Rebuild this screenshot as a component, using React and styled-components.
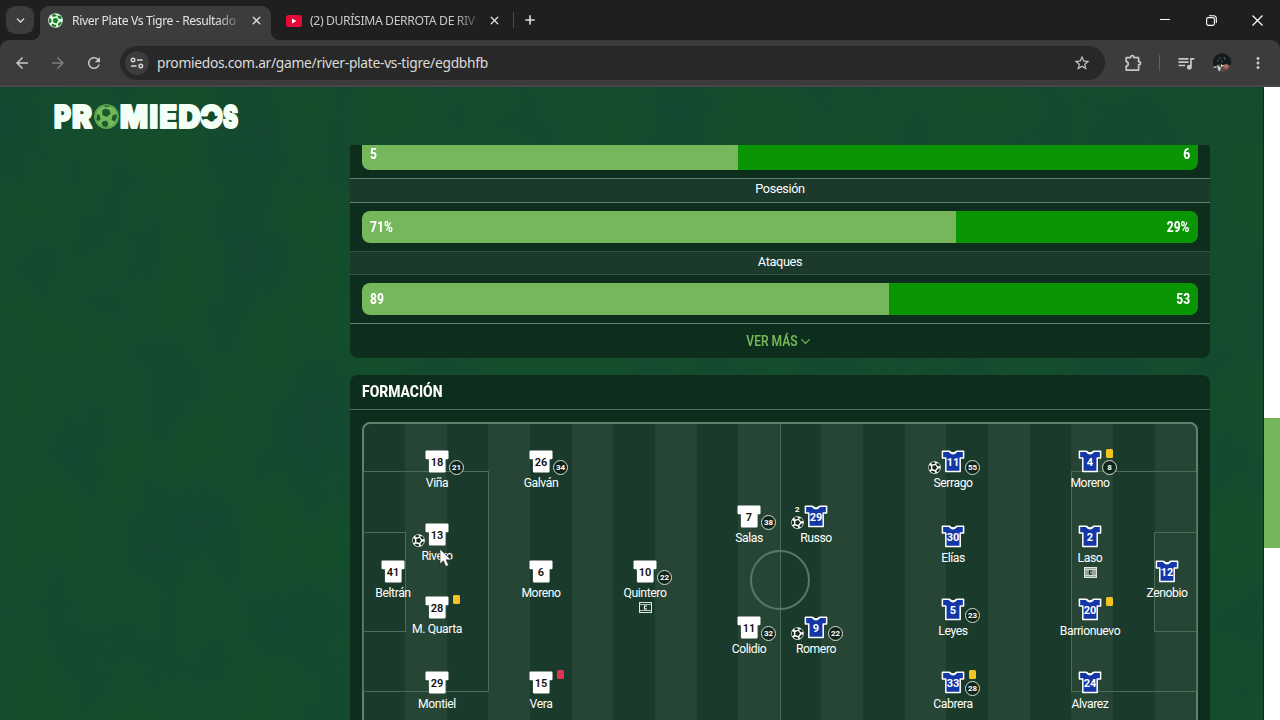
import React from 'react';
import styled, { createGlobalStyle, css } from 'styled-components';
import { LuX, LuPlus, LuChevronDown } from 'react-icons/lu';
import {
  MdArrowBack,
  MdArrowForward,
  MdRefresh,
  MdStarBorder,
  MdMoreVert,
  MdQueueMusic,
} from 'react-icons/md';

const GlobalStyle = createGlobalStyle`
  * {
    box-sizing: border-box;
  }
  body {
    margin: 0;
    overflow: hidden;
    font-family: Roboto, 'Liberation Sans', sans-serif;
    color: #fff;
  }
  svg {
    display: block;
    flex: none;
  }
`;

const Window = styled.div`
  width: 1280px;
  height: 720px;
  display: flex;
  flex-direction: column;
  overflow: hidden;
  background: #1f1f1f;
`;

/* ---- browser ---- */

const TabStrip = styled.div`
  height: 40px;
  flex: none;
  display: flex;
  align-items: center;
  padding-left: 6px;
  font-family: 'Noto Sans', sans-serif;
`;

const TabSearch = styled.div`
  width: 28px;
  height: 28px;
  border-radius: 9px;
  background: #3c3c3c;
  display: grid;
  place-items: center;
`;

const Tab = styled.div`
  height: 34px;
  display: flex;
  align-items: center;
  align-self: flex-end;
  position: relative;
  padding-bottom: 5px;
  ${({ $active }) =>
    $active
      ? css`
          width: 231px;
          margin-left: 6px;
          padding-left: 8px;
          background: #3c3c3c;
          border-radius: 9px 9px 0 0;
          &::before,
          &::after {
            content: '';
            position: absolute;
            bottom: 0;
            width: 9px;
            height: 9px;
          }
          &::before {
            left: -9px;
            background: radial-gradient(circle at 0 0, transparent 9px, #3c3c3c 9.5px);
          }
          &::after {
            right: -9px;
            background: radial-gradient(circle at 100% 0, transparent 9px, #3c3c3c 9.5px);
          }
        `
      : css`
          width: 242px;
          padding-left: 15px;
        `}
`;

const TabTitle = styled.span`
  width: ${({ $width }) => $width}px;
  margin-left: ${({ $gap }) => $gap}px;
  white-space: nowrap;
  font-size: 12.2px;
  line-height: 20px;
  letter-spacing: ${({ $spacing }) => $spacing}px;
  color: ${({ $active }) => ($active ? '#e3e3e3' : '#c9c9c9')};
  mask-image: linear-gradient(to right, #000 86%, transparent 104%);
`;

const TabClose = styled(LuX)`
  margin-left: ${({ $gap }) => $gap}px;
  color: #e3e3e3;
`;

const TabDivider = styled.div`
  width: 1px;
  height: 16px;
  background: #4b4b4b;
  margin-right: 9px;
`;

const WindowButtons = styled.div`
  margin-left: auto;
  display: grid;
  grid-template-columns: repeat(3, 46px);
  justify-items: center;
  align-items: center;
`;

const Toolbar = styled.div`
  height: 47px;
  flex: none;
  display: flex;
  align-items: center;
  padding: 0 13px;
  background: #3c3c3c;
  border-radius: 9px 9px 0 0;
  border-bottom: 2px solid #484646;
  color: #c7c7c7;
`;

const NavButtons = styled.div`
  width: 107px;
  display: flex;
  gap: 18px;
  svg:nth-child(2) {
    color: #7d7d7d;
  }
`;

const UrlBar = styled.div`
  width: 985px;
  flex: none;
  height: 34px;
  border-radius: 17px;
  background: #282828;
  display: flex;
  align-items: center;
  padding: 0 14px 0 5px;
`;

const SiteInfo = styled.div`
  width: 24px;
  height: 24px;
  border-radius: 50%;
  background: #3c3c3c;
  display: grid;
  place-items: center;
`;

const Url = styled.span`
  flex: 1;
  margin-left: 8px;
  font-family: 'Noto Sans', sans-serif;
  font-size: 13.8px;
  line-height: 20px;
  letter-spacing: -0.29px;
  color: #dcdcdc;
  white-space: nowrap;
`;

const ToolbarRight = styled.div`
  margin-left: auto;
  display: flex;
  align-items: center;
`;

const ToolbarDivider = styled.div`
  width: 1px;
  height: 16px;
  margin: 0 16px 0 17px;
  background: #606060;
`;

const Avatar = styled.svg`
  margin: 0 17px 0 16px;
`;

/* ---- page ---- */

const Viewport = styled.div`
  flex: 1;
  min-height: 0;
  display: flex;
`;

const Page = styled.div`
  width: 1264px;
  border-right: 1px solid #0c2e1a;
  display: flex;
  flex-direction: column;
  position: relative;
  background: #144e2b;
`;

const Grass = styled.svg`
  position: absolute;
  inset: 0;
  width: 100%;
  height: 100%;
`;

const Header = styled.header`
  height: 58px;
  flex: none;
  padding: 5px 0 0 52px;
  position: relative;
`;

const Scroller = styled.main`
  flex: 1;
  min-height: 0;
  overflow: hidden;
  position: relative;
  padding-left: 350px;
  display: flex;
  flex-direction: column;
  gap: 17px;
`;

const ScrollTrack = styled.div`
  width: 16px;
  background: #fff;
  padding-top: 331px;
`;

const ScrollThumb = styled.div`
  height: 130px;
  background: #74b559;
`;

const Panel = styled.section`
  width: 860px;
  flex: none;
  background: #0d2e1c;
  border-radius: ${({ $cut }) => ($cut ? '0 0 8px 8px' : '8px 8px 0 0')};
`;

const StatBar = styled.div`
  height: ${({ $cut }) => ($cut ? 25 : 32)}px;
  margin: ${({ $cut }) => ($cut ? '0 12px 8px' : '8px 12px 8px')};
  display: flex;
  align-items: flex-end;
  border-radius: ${({ $cut }) => ($cut ? '0 0 8px 8px' : '8px')};
  overflow: hidden;
`;

const StatSide = styled.div`
  width: ${({ $share }) => $share}%;
  height: 32px;
  padding: 0 8px;
  display: flex;
  align-items: center;
  justify-content: ${({ $away }) => ($away ? 'flex-end' : 'flex-start')};
  background: ${({ $away }) => ($away ? '#0a9604' : '#76b75b')};
`;

const Condensed = styled.span`
  display: inline-block;
  font-weight: ${({ $weight }) => $weight || 800};
  font-size: ${({ $size }) => $size}px;
  line-height: 20px;
  white-space: nowrap;
  transform: scaleX(${({ $scale }) => $scale || 0.86});
  transform-origin: ${({ $origin }) => $origin || 'left'};
`;

const StatLabel = styled.div`
  height: 24.5px;
  border-top: 1px solid ${({ $faint }) => ($faint ? '#315344' : '#5b8571')};
  border-bottom: 1px solid ${({ $faint }) => ($faint ? '#315344' : '#5b8571')};
  background: #1b3a2b;
  font-size: 12.7px;
  line-height: 19.5px;
  letter-spacing: -0.35px;
  text-align: center;
`;

const ShowMore = styled.div`
  height: 35px;
  border-top: 1px solid #5b8571;
  display: flex;
  align-items: center;
  justify-content: center;
  color: #76b75b;
  padding-right: 9px;
`;

const PanelTitle = styled.h2`
  height: 35px;
  margin: 0;
  padding: 7px 12px 0;
  display: flex;
  align-items: flex-start;
  border-bottom: 1px solid #4a715c;
`;

const Pitch = styled.div`
  position: relative;
  height: 314px;
  margin: 12px 12px 0;
  border: 2px solid #5e846f;
  border-radius: 8px 8px 0 0;
  background: repeating-linear-gradient(to right, #1a3b2b 0 41.65px, #264534 41.65px 83.3px) -0.7px 0 /
    calc(100% + 4px) 100%;
`;

const Line = styled.div`
  position: absolute;
  border: 1px solid #4a6d5a;
  left: ${({ $x }) => $x}px;
  top: ${({ $y }) => $y}px;
  width: ${({ $w }) => $w}px;
  height: ${({ $h }) => $h}px;
  ${({ $round }) => $round && 'border: 2px solid #557966; border-radius: 50%;'}
  ${({ $halfway }) => $halfway && 'border-width: 0 0 0 1px;'}
`;

const Player = styled.div`
  position: absolute;
  left: ${({ $x }) => $x - 364}px;
  top: ${({ $y }) => $y - 424}px;
  transform: translateX(-50%);
  width: 100px;
  display: flex;
  flex-direction: column;
  align-items: center;
`;

const PlayerName = styled.span`
  margin-top: 2px;
  font-size: 12.2px;
  line-height: 16px;
  letter-spacing: -0.42px;
  white-space: nowrap;
`;

const Captain = styled.svg`
  margin-top: 1px;
`;

const Card = styled.span`
  position: absolute;
  left: 66px;
  top: -1px;
  width: 7px;
  height: 9px;
  border-radius: 1.5px;
  background: ${({ $kind }) => ($kind === 'red' ? '#e03450' : '#f2c524')};
`;

const SubMinute = styled.span`
  position: absolute;
  left: 62px;
  top: 10px;
  width: 15px;
  height: 15px;
  border: 1px solid #d5ddd8;
  border-radius: 50%;
  background: #10251a;
  font-size: 8px;
  font-weight: 700;
  line-height: 13px;
  letter-spacing: -0.2px;
  text-align: center;
`;

const Goal = styled.span`
  position: absolute;
  left: 24.5px;
  top: 11px;
`;

const GoalCount = styled.span`
  position: absolute;
  left: 29px;
  top: 0;
  font-size: 8px;
  font-weight: 700;
  line-height: 9px;
`;

const Pointer = styled.svg`
  position: absolute;
  left: 75px;
  top: 124px;
`;

const BallIcon = ({ size = 13, light = '#fff', dark = '#12291c' }) => (
  <svg width={size} height={size} viewBox="0 0 26 26">
    <circle cx="13" cy="13" r="12.6" fill={light} />
    <g fill={dark} transform="rotate(18 13 13)">
      <path d="M13 8l4.9 3.5-1.9 5.8h-6l-1.9-5.8z" />
      <path d="M7.8 2.4l4.8 2L10 7.3 6 8.4 3.6 5.9zM18.2 2.4l4.2 3.5L20 8.4l-4.1-1.1-2.4-2.9z" />
      <path d="M1.6 12.1L5 12.6l2.2 4.9-1.2 3-2.6-.9A12 12 0 011.6 12.1zM24.4 12.1l-3.4.5-2.2 4.9 1.2 3 2.6-.9a12 12 0 001.8-7.5z" />
      <path d="M9.6 20.2h6.8l1.2 2.9-4.6 1.7L8.4 23z" />
    </g>
  </svg>
);

const Shirt = ({ number, away }) => (
  <svg width="24" height="23" viewBox="0 0 24 23">
    {away ? (
      <path
        d="M1.4 1.3h6.8c1.6 2.2 6 2.2 7.6 0h6.8v6.6h-3.4v13.6H4.8V7.9H1.4z"
        fill="#1437a8"
        stroke="#fff"
        strokeWidth="1.5"
        strokeLinejoin="round"
      />
    ) : (
      <path
        d="M1.5.5h21a1 1 0 011 1v6.8a1 1 0 01-1 1h-1.9v12a1.2 1.2 0 01-1.2 1.2H5.1a1.2 1.2 0 01-1.2-1.2v-12H1.5a1 1 0 01-1-1V1.5a1 1 0 011-1z"
        fill="#fff"
      />
    )}
    {away && <path d="M8.6 1.1c1.4 3.6 5.4 3.6 6.8 0" fill="none" stroke="#fff" strokeWidth="1.4" />}
    <text
      x="12"
      y="15.6"
      textAnchor="middle"
      fontFamily="Roboto, sans-serif"
      fontSize="11"
      fontWeight={away ? 700 : 600}
      fill={away ? '#fff' : '#111'}
    >
      {number}
    </text>
  </svg>
);

const CaptainIcon = ({ faded }) => (
  <Captain width="13" height="11" viewBox="0 0 13 11">
    <rect x=".5" y=".5" width="12" height="10" fill={faded ? '#94a69c' : 'none'} stroke="#dfe6e2" />
    <path d="M1 2.5h11M1 8.5h11" stroke="#dfe6e2" strokeWidth=".8" />
    <path d="M8 4H5.5v3H8" fill="none" stroke={faded ? '#10251a' : '#fff'} strokeWidth="1.1" />
  </Captain>
);

const letters = [
  ['P', 2, 17],
  ['R', 20, 20],
  ['M', 68, 28],
  ['I', 97.5, 8.5],
  ['E', 107.5, 17.5],
  ['D', 126.5, 22],
  ['O', 148, 23],
  ['S', 171, 15],
];

const Logo = () => (
  <svg width="194" height="48" viewBox="0 0 194 48">
    <g
      fill="#f4fff6"
      stroke="#f4fff6"
      strokeWidth="2"
      strokeLinejoin="round"
      fontFamily="Inter, sans-serif"
      fontWeight="900"
      fontSize="31"
    >
      {letters.map(([char, x, width]) => (
        <text key={char} x={x} y="36" textLength={width} lengthAdjust="spacingAndGlyphs">
          {char}
        </text>
      ))}
    </g>
    {/* the ball stands in for the first O */}
    <g transform="translate(54.5 24.5)">
      <circle r="12.3" fill="#74b959" />
      <circle r="11.2" fill="none" stroke="#4c9446" strokeWidth=".8" />
      <g fill="#1c5a2e">
        <path d="M-1-8l4 1.5 1 4L0 .5l-4-2L-4.500-6z" />
        <path d="M-9.500-2.500l2.500 1 1 4-2 2.500-2-2zM6-1l3.500-1.500 1 2.500-2 5-3.500-1.500z" />
        <path d="M-4 5l4-1 2 3-1.500 3.500-3.500-.5-2-2.500zM-3.500-10.500l5.500-.5 1.500 1-4 .6z" />
      </g>
    </g>
    <path d="M149 24.500h6l2-2h3l2 1.500h4l-2 3h-4l-2 1.500-3-1.500h-3l-1 1.500z" fill="#154d2b" />
  </svg>
);

const players = [
  { n: 18, name: 'Viña', x: 437, y: 450, sub: 21 },
  { n: 13, name: 'Rivero', x: 437, y: 523, goals: 1 },
  { n: 41, name: 'Beltrán', x: 393, y: 560 },
  { n: 28, name: 'M. Quarta', x: 437, y: 596, card: 'yellow' },
  { n: 29, name: 'Montiel', x: 437, y: 671 },
  { n: 26, name: 'Galván', x: 541, y: 450, sub: 34 },
  { n: 6, name: 'Moreno', x: 541, y: 560 },
  { n: 15, name: 'Vera', x: 541, y: 671, card: 'red' },
  { n: 10, name: 'Quintero', x: 645, y: 560, sub: 22, captain: true },
  { n: 7, name: 'Salas', x: 749, y: 505, sub: 38 },
  { n: 11, name: 'Colidio', x: 749, y: 616, sub: 32 },
  { n: 29, name: 'Russo', x: 816, y: 505, away: true, goals: 2 },
  { n: 9, name: 'Romero', x: 816, y: 616, away: true, goals: 1, sub: 22 },
  { n: 11, name: 'Serrago', x: 953, y: 450, away: true, goals: 1, sub: 55 },
  { n: 30, name: 'Elías', x: 953, y: 525, away: true },
  { n: 5, name: 'Leyes', x: 953, y: 598, away: true, sub: 23 },
  { n: 33, name: 'Cabrera', x: 953, y: 671, away: true, card: 'yellow', sub: 28 },
  { n: 4, name: 'Moreno', x: 1090, y: 450, away: true, card: 'yellow', sub: 8 },
  { n: 2, name: 'Laso', x: 1090, y: 525, away: true, captain: true },
  { n: 20, name: 'Barrionuevo', x: 1090, y: 598, away: true, card: 'yellow' },
  { n: 24, name: 'Alvarez', x: 1090, y: 671, away: true },
  { n: 12, name: 'Zenobio', x: 1167, y: 560, away: true },
];

const Stat = ({ home, away, share, cut }) => (
  <StatBar $cut={cut}>
    <StatSide $share={share}>
      <Condensed $size={14}>{home}</Condensed>
    </StatSide>
    <StatSide $share={100 - share} $away>
      <Condensed $size={14} $origin="right">
        {away}
      </Condensed>
    </StatSide>
  </StatBar>
);

const App = () => (
  <Window>
    <GlobalStyle />
    <TabStrip>
      <TabSearch>
        <LuChevronDown size={13} strokeWidth={2.5} color="#e3e3e3" />
      </TabSearch>
      <Tab $active>
        <BallIcon size={15} light="#eefcf0" dark="#168427" />
        <TabTitle $active $width={167} $gap={9} $spacing={-0.4}>
          River Plate Vs Tigre - Resultado
        </TabTitle>
        <TabClose size={13} $gap={11} strokeWidth={2.4} />
      </Tab>
      <Tab>
        <svg width="16" height="12" viewBox="0 0 16 12">
          <rect width="16" height="12" rx="2.5" fill="#e5093a" />
          <path d="M6 3.4v5.2L10.4 6z" fill="#fff" />
        </svg>
        <TabTitle $width={168} $gap={8} $spacing={-0.36}>
          (2) DURÍSIMA DERROTA DE RIV
        </TabTitle>
        <TabClose size={13} $gap={10} strokeWidth={2.4} />
      </Tab>
      <TabDivider />
      <LuPlus size={14} strokeWidth={2.8} color="#dcdcdc" />
      <WindowButtons>
        <svg width="10" height="10" viewBox="0 0 10 10">
          <path d="M0 4.5h10" stroke="#fff" />
        </svg>
        <svg width="11" height="11" viewBox="0 0 11 11" fill="none" stroke="#fff" strokeWidth="1.1">
          <rect x=".6" y="2.6" width="7.8" height="7.8" rx="1.6" />
          <path d="M3 .7h4.8a2.5 2.5 0 012.5 2.5V8" />
        </svg>
        <svg width="11" height="11" viewBox="0 0 11 11">
          <path d="M.5.5l10 10M10.5.5l-10 10" stroke="#fff" strokeWidth="1.2" />
        </svg>
      </WindowButtons>
    </TabStrip>
    <Toolbar>
      <NavButtons>
        <MdArrowBack size={18} />
        <MdArrowForward size={18} />
        <MdRefresh size={18} />
      </NavButtons>
      <UrlBar>
        <SiteInfo>
          <svg width="14" height="12" viewBox="0 0 14 12" fill="none" stroke="#d6d6d6" strokeWidth="1.4">
            <circle cx="3" cy="3" r="1.8" />
            <path d="M7 3h5.5M1 9h5.5" />
            <circle cx="10.8" cy="9" r="1.8" />
          </svg>
        </SiteInfo>
        <Url>promiedos.com.ar/game/river-plate-vs-tigre/egdbhfb</Url>
        <MdStarBorder size={18} />
      </UrlBar>
      <ToolbarRight>
        <svg width="18" height="18" viewBox="0 0 18 18" fill="none" stroke="#c7c7c7" strokeWidth="1.7">
          <path
            d="M2.2 3.6h4.3c0-2.6 3.4-2.6 3.4 0h4.7v4.1c2.6 0 2.6 3.2 0 3.2v5.2H2.2v-4c2.7-.4 2.7-4 0-4.4z"
            strokeLinejoin="round"
          />
        </svg>
        <ToolbarDivider />
        <MdQueueMusic size={20} />
        <Avatar width="20" height="20" viewBox="0 0 20 20">
          <circle cx="10" cy="9.5" r="9.2" fill="#151a1c" />
          <path d="M2 14l5-3 3 2 4-2 5 2-3 4-5 2-5-1z" fill="#5d4a48" />
          <path d="M11 12l4-1 2 2-2 3-3-1z" fill="#b06a5c" />
          <path d="M5 12l2 7 2-4zM9 11l3 2-3 1zM1 14l4-1-2 2z" fill="#bfe3de" />
          <path d="M7 4l2 2M12 4l1 3M5 7l2 1M9 8l2 1" stroke="#4b6468" />
        </Avatar>
        <MdMoreVert size={18} />
      </ToolbarRight>
    </Toolbar>
    <Viewport>
      <Page>
        <Grass>
          <filter id="grass" colorInterpolationFilters="sRGB">
            <feTurbulence type="fractalNoise" baseFrequency="0.014 0.01" numOctaves="4" seed="4" />
            <feColorMatrix values="0 0 0 0 0.08  0 0 0 0 0.26  0 0 0 0 0.23  1.8 0 0 0 -0.6" />
          </filter>
          <rect width="100%" height="100%" filter="url(#grass)" opacity="0.55" />
        </Grass>
        <Header>
          <Logo />
        </Header>
        <Scroller>
          <Panel $cut>
            <Stat home="5" away="6" share={45} cut />
            <StatLabel>Posesión</StatLabel>
            <Stat home="71%" away="29%" share={71} />
            <StatLabel $faint>Ataques</StatLabel>
            <Stat home="89" away="53" share={63} />
            <ShowMore>
              <Condensed $size={14} $weight={600} $scale={0.86} $origin="right">
                VER MÁS
              </Condensed>
              <LuChevronDown size={15} strokeWidth={2} />
            </ShowMore>
          </Panel>
          <Panel>
            <PanelTitle>
              <Condensed $size={16} $scale={0.87}>
                FORMACIÓN
              </Condensed>
            </PanelTitle>
            <Pitch>
              <Line $x={-1} $y={47} $w={126} $h={221} />
              <Line $x={-1} $y={108} $w={43} $h={100} />
              <Line $x={707} $y={47} $w={126} $h={221} />
              <Line $x={790} $y={108} $w={43} $h={100} />
              <Line $x={416} $y={0} $w={1} $h={312} $halfway />
              <Line $x={386} $y={126} $w={60} $h={60} $round />
              {players.map(({ n, name, x, y, away, sub, card, goals, captain }) => (
                <Player key={`${name}${n}`} $x={x} $y={y}>
                  <Shirt number={n} away={away} />
                  <PlayerName>{name}</PlayerName>
                  {captain && <CaptainIcon faded={away} />}
                  {card && <Card $kind={card} />}
                  {sub && <SubMinute>{sub}</SubMinute>}
                  {goals && (
                    <Goal>
                      <BallIcon />
                    </Goal>
                  )}
                  {goals > 1 && <GoalCount>{goals}</GoalCount>}
                </Player>
              ))}
              <Pointer width="14" height="20" viewBox="0 0 14 20">
                <path
                  d="M1 1v15l3.4-3.2L6.8 18.5l2.8-1.2-2.4-5.5H12z"
                  fill="#fff"
                  stroke="#222"
                  strokeWidth=".6"
                />
              </Pointer>
            </Pitch>
          </Panel>
        </Scroller>
      </Page>
      <ScrollTrack>
        <ScrollThumb />
      </ScrollTrack>
    </Viewport>
  </Window>
);

export default App;
